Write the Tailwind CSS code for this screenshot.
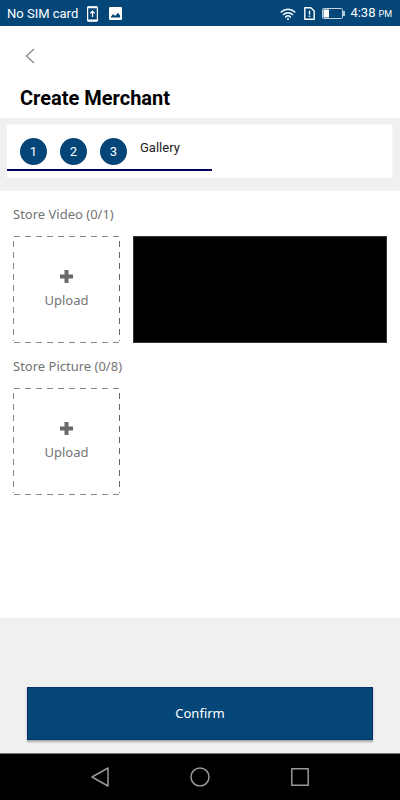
<!DOCTYPE html>
<html lang="en">
<head>
<meta charset="utf-8">
<meta name="viewport" content="width=device-width, initial-scale=1">
<title>Create Merchant</title>
<script src="https://cdn.jsdelivr.net/npm/@tailwindcss/browser@4"></script>
</head>
<body class="flex min-h-screen flex-col bg-white font-['Roboto',sans-serif] text-black">
  <div class="flex h-[26px] shrink-0 items-center bg-[#044678] pl-[7px] pr-2 pt-px text-white">
    <span class="text-[13px] leading-4">No SIM card</span>
    <svg class="ml-[9px] h-4 w-[11px]" viewBox="0 0 11 16" fill="none" stroke="currentColor" aria-hidden="true">
      <rect x="0.6" y="0.8" width="9.8" height="14.4" rx="0.8" stroke-width="1.2"/>
      <path d="M1 1.4h9M1 14.4h9" stroke-width="1.6"/>
      <path d="M5.5 11V5.6M3.3 7.4l2.2-2.2 2.2 2.2" stroke-width="1.3"/>
    </svg>
    <svg class="ml-[11px] h-[13px] w-[13px]" viewBox="0 0 13 13" aria-hidden="true">
      <rect width="13" height="13" rx="1.2" fill="#fff"/>
      <path d="M2 10.6V9.4L4.2 7l2 2 2.8-3.2 2.2 3v1.8z" fill="#044678"/>
    </svg>
    <div class="ml-auto flex items-center">
      <svg class="h-3 w-4" viewBox="0 0 16 12" fill="none" stroke="currentColor" stroke-width="1.5" stroke-linecap="round" aria-hidden="true">
        <path d="M1.2 4a9.8 9.8 0 0 1 13.6 0M3.4 6.5a6.6 6.6 0 0 1 9.2 0M5.6 8.9a3.4 3.4 0 0 1 4.8 0"/>
        <circle cx="8" cy="11" r="1" fill="currentColor" stroke="none"/>
      </svg>
      <svg class="ml-2 h-[13px] w-[11px]" viewBox="0 0 11 13" fill="none" stroke="currentColor" stroke-width="1.4" aria-hidden="true">
        <path d="M0.8 0.8h6l3.4 3.2v8.2H0.8z" stroke-linejoin="round"/>
        <path d="M5.5 3.8v3.6M5.5 8.6v1.4"/>
      </svg>
      <svg class="ml-[7px] h-[11px] w-[23px]" viewBox="0 0 23 11" aria-hidden="true">
        <rect x="0.5" y="0.5" width="20" height="10" rx="1.2" fill="none" stroke="#c3d2df"/>
        <rect x="1.5" y="1.5" width="5.5" height="8" fill="#fff"/>
        <path d="M22 3v5" stroke="#fff" stroke-width="1.4"/>
      </svg>
      <span class="ml-[5px] flex items-baseline gap-[3px] text-[13px] leading-4">4:38 <span class="text-[9px]">PM</span></span>
    </div>
  </div>

  <header class="flex h-[92px] shrink-0 flex-col px-5 pt-5">
    <button type="button" aria-label="Back" class="flex h-5 w-5 items-center justify-center text-[#8c8c8c]">
      <svg class="h-4 w-[10px]" viewBox="0 0 10 16" fill="none" stroke="currentColor" stroke-width="1.4" aria-hidden="true"><path d="M9 1L1.5 8 9 15"/></svg>
    </button>
    <h1 class="mt-5 text-[20px] font-bold leading-6">Create Merchant</h1>
  </header>

  <nav class="shrink-0 bg-[#f0f0f0] px-[7px] pb-[13px] pt-[6px]" aria-label="Steps">
    <div class="border border-l-0 border-b-0 border-[#f7f7f7] bg-white pb-[7px]">
      <ol class="flex w-[205px] gap-[13px] border-b-2 border-[#03035f] pb-1 pl-[13px] pt-[13px] text-[13px]">
        <li class="flex h-[27px] w-[27px] items-center justify-center rounded-full bg-[#044678] text-white">1</li>
        <li class="flex h-[27px] w-[27px] items-center justify-center rounded-full bg-[#044678] text-white">2</li>
        <li class="flex h-[27px] w-[27px] items-center justify-center rounded-full bg-[#044678] text-white">3</li>
        <li class="leading-5 text-[#222]">Gallery</li>
      </ol>
    </div>
  </nav>

  <main class="flex-1 px-[13px] pb-[13px] pt-[13px] font-['Noto_Sans',sans-serif] text-[13px] text-[#737373]">
    <section>
      <h2 class="leading-5">Store Video (0/1)</h2>
      <div class="mt-3 flex gap-[13px]">
        <button type="button" class="relative flex h-[107px] w-[107px] shrink-0 flex-col items-center pt-[34px]">
          <svg class="absolute inset-0 h-full w-full" viewBox="0 0 107 107" fill="none" stroke="#888" stroke-dasharray="6 5" aria-hidden="true">
            <path d="M1 0.5H107M1 106.5H107"/><path d="M0.5 5V105"/><path d="M106.5 5V105" stroke="#666"/>
          </svg>
          <svg class="h-[13px] w-[13px]" viewBox="0 0 13 13" stroke="#6a6a6a" stroke-width="4" aria-hidden="true"><path d="M6.5 0v13M0 6.5h13"/></svg>
          <span class="mt-[7px] leading-5">Upload</span>
        </button>
        <div class="h-[107px] flex-1 border border-[#333] bg-black" role="img" aria-label="Video preview"></div>
      </div>
    </section>
    <section class="mt-[13px]">
      <h2 class="leading-5">Store Picture (0/8)</h2>
      <div class="mt-3 flex gap-[13px]">
        <button type="button" class="relative flex h-[107px] w-[107px] shrink-0 flex-col items-center pt-[34px]">
          <svg class="absolute inset-0 h-full w-full" viewBox="0 0 107 107" fill="none" stroke="#888" stroke-dasharray="6 5" aria-hidden="true">
            <path d="M1 0.5H107M1 106.5H107"/><path d="M0.5 5V105"/><path d="M106.5 5V105" stroke="#666"/>
          </svg>
          <svg class="h-[13px] w-[13px]" viewBox="0 0 13 13" stroke="#6a6a6a" stroke-width="4" aria-hidden="true"><path d="M6.5 0v13M0 6.5h13"/></svg>
          <span class="mt-[7px] leading-5">Upload</span>
        </button>
      </div>
    </section>
  </main>

  <footer class="shrink-0 bg-[#f0f0f0] px-[27px] pb-[13px] pt-[69px]">
    <button type="button" class="h-[53px] w-full border border-[#04336b] bg-[#044678] font-['Noto_Sans',sans-serif] text-[13px] text-white shadow-[0_2px_2px_rgba(0,0,0,0.3)]">Confirm</button>
  </footer>

  <nav class="flex h-[47px] shrink-0 items-center justify-center gap-20 border-t border-[#777] bg-black text-[#999]" aria-label="System navigation">
    <button type="button" aria-label="Back"><svg class="h-5 w-5" viewBox="0 0 20 20" fill="none" stroke="currentColor" stroke-width="1.5" stroke-linejoin="round" aria-hidden="true"><path d="M18 1v18L2 10z"/></svg></button>
    <button type="button" aria-label="Home"><svg class="h-5 w-5" viewBox="0 0 20 20" fill="none" stroke="currentColor" stroke-width="1.5" aria-hidden="true"><circle cx="10" cy="10" r="9"/></svg></button>
    <button type="button" aria-label="Recent apps"><svg class="h-5 w-5" viewBox="0 0 20 20" fill="none" stroke="currentColor" stroke-width="1.5" stroke-linejoin="round" aria-hidden="true"><rect x="1.8" y="1.8" width="16.4" height="16.4"/></svg></button>
  </nav>
</body>
</html>
